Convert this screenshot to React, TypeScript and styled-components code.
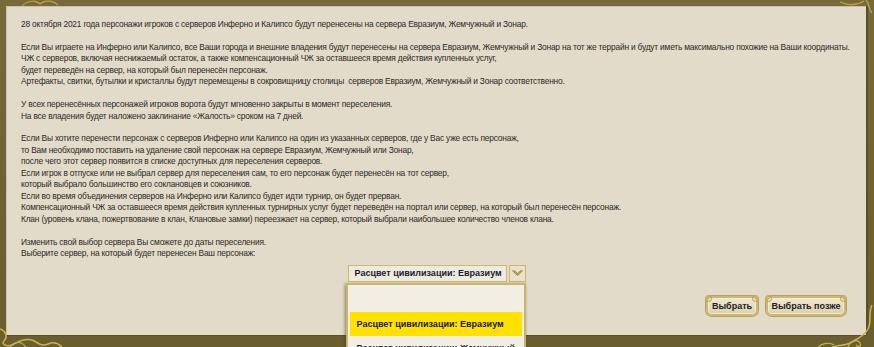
import styled, { createGlobalStyle } from "styled-components";

const GlobalStyle = createGlobalStyle`
  html, body {
    margin: 0;
    padding: 0;
    overflow: hidden;
    background: #6e6232;
  }
`;

const Frame = styled.div`
  position: relative;
  width: 874px;
  height: 347px;
  box-sizing: border-box;
  padding: 6px 8px 12px 6px;
  background: linear-gradient(180deg, #76693a 0%, #6e6232 60%, #6a5e2f 100%);
  overflow: hidden;
`;

const Panel = styled.div`
  height: 100%;
  box-sizing: border-box;
  padding: 13px 20px 0 15px;
  background: #e2dbca;
  box-shadow: inset 1px 1px 0 #cbc2aa, 2px 0 0 #5b5024, 0 1px 0 #5b5024;
  font-family: "Liberation Sans", Arial, sans-serif;
  font-size: 8.4px;
  letter-spacing: -0.2px;
  line-height: 11.45px;
  color: #2d2a24;
`;

const Paragraph = styled.p`
  margin: 0 0 11.45px 0;
  white-space: nowrap;

  &:last-of-type {
    margin-bottom: 0;
  }
`;

const SelectRow = styled.div`
  display: flex;
  justify-content: center;
  margin-top: 6px;
  padding-left: 6px;
`;

const SelectWrap = styled.div`
  position: relative;
  display: flex;
  gap: 2px;
`;

const SelectBox = styled.div`
  width: 151px;
  height: 15px;
  border: 1px solid #cdb86c;
  background: #efeadf;
  box-sizing: content-box;
  display: flex;
  align-items: center;
  padding-left: 6px;
`;

const BoldText = styled.span`
  font-family: "Liberation Sans", Arial, sans-serif;
  font-weight: bold;
  font-size: 9px;
  letter-spacing: 0;
  color: #1d1c2c;
  white-space: nowrap;
`;

const ArrowBox = styled.div`
  width: 15px;
  height: 15px;
  border: 1px solid #cdb86c;
  background: #e8e1cd;
  display: flex;
  align-items: center;
  justify-content: center;
`;

const DropList = styled.div`
  position: absolute;
  top: 18px;
  left: -2px;
  width: 176px;
  height: 90px;
  background: #f2eee4;
  border: 2px solid #c8b56e;
  box-shadow: -1px 1px 3px rgba(60, 50, 20, 0.55);
  padding-top: 3px;
  z-index: 2;
`;

const Option = styled.div<{ $active?: boolean }>`
  height: 24px;
  display: flex;
  align-items: center;
  padding-left: 7px;
  margin: 0 2px;
  background: ${({ $active }) => ($active ? "#ffe100" : "transparent")};
`;

const ButtonRow = styled.div`
  display: flex;
  justify-content: flex-end;
  gap: 8px;
  margin-top: 14px;
`;

const GoldButton = styled.div<{ $w: number }>`
  position: relative;
  width: ${({ $w }) => $w}px;
  height: 20px;
  box-sizing: border-box;
  border: 2px solid #cdb872;
  border-radius: 6px;
  background: linear-gradient(180deg, #efe7cf 0%, #e6dcbc 55%, #ddd0a6 100%);
  box-shadow: inset 0 0 0 1px #f3ecd4, 0 0 0 1px #b3a265;
  display: flex;
  align-items: center;
  justify-content: center;

  &::before,
  &::after {
    content: "";
    position: absolute;
    width: 5px;
    height: 5px;
    border: 1px solid #b99d43;
    border-radius: 50%;
    top: -3px;
  }
  &::before {
    left: -3px;
  }
  &::after {
    right: -3px;
  }
`;

const Ornament = styled.svg`
  position: absolute;
  pointer-events: none;
`;

const Chevron = () => (
  <svg width="11" height="7" viewBox="0 0 11 7">
    <path d="M0.5 0.8 L5.5 5.8 L10.5 0.8 L8.3 0.8 L5.5 3.4 L2.7 0.8 Z" fill="#c9a630" stroke="#8a7020" strokeWidth="0.6" />
  </svg>
);

export default function App() {
  return (
    <>
      <GlobalStyle />
      <Frame>
        <Panel>
          <Paragraph>
            28 октября 2021 года персонажи игроков с серверов Инферно и Калипсо будут перенесены на сервера Евразиум, Жемчужный и Зонар.
          </Paragraph>
          <Paragraph>
            Если Вы играете на Инферно или Калипсо, все Ваши города и внешние владения будут перенесены на сервера Евразиум, Жемчужный и Зонар на тот же террайн и будут иметь максимально похожие на Ваши координаты.
            <br />
            ЧЖ с серверов, включая неснижаемый остаток, а также компенсационный ЧЖ за оставшееся время действия купленных услуг,
            <br />
            будет переведён на сервер, на который был перенесён персонаж.
            <br />
            Артефакты, свитки, бутылки и кристаллы будут перемещены в сокровищницу столицы&nbsp; серверов Евразиум, Жемчужный и Зонар соответственно.
          </Paragraph>
          <Paragraph>
            У всех перенесённых персонажей игроков ворота будут мгновенно закрыты в момент переселения.
            <br />
            На все владения будет наложено заклинание «Жалость» сроком на 7 дней.
          </Paragraph>
          <Paragraph>
            Если Вы хотите перенести персонаж с серверов Инферно или Калипсо на один из указанных серверов, где у Вас уже есть персонаж,
            <br />
            то Вам необходимо поставить на удаление свой персонаж на сервере Евразиум, Жемчужный или Зонар,
            <br />
            после чего этот сервер появится в списке доступных для переселения серверов.
            <br />
            Если игрок в отпуске или не выбрал сервер для переселения сам, то его персонаж будет перенесён на тот сервер,
            <br />
            который выбрало большинство его соклановцев и союзников.
            <br />
            Если во время объединения серверов на Инферно или Калипсо будет идти турнир, он будет прерван.
            <br />
            Компенсационный ЧЖ за оставшееся время действия купленных турнирных услуг будет переведён на портал или сервер, на который был перенесён персонаж.
            <br />
            Клан (уровень клана, пожертвование в клан, Клановые замки) переезжает на сервер, который выбрали наибольшее количество членов клана.
          </Paragraph>
          <Paragraph>
            Изменить свой выбор сервера Вы сможете до даты переселения.
            <br />
            Выберите сервер, на который будет перенесен Ваш персонаж:
          </Paragraph>

          <SelectRow>
            <SelectWrap>
              <SelectBox>
                <BoldText>Расцвет цивилизации: Евразиум</BoldText>
              </SelectBox>
              <ArrowBox>
                <Chevron />
              </ArrowBox>
              <DropList>
                <Option />
                <Option $active>
                  <BoldText>Расцвет цивилизации: Евразиум</BoldText>
                </Option>
                <Option>
                  <BoldText>Расцвет цивилизации: Жемчужный</BoldText>
                </Option>
              </DropList>
            </SelectWrap>
          </SelectRow>

          <ButtonRow>
            <GoldButton $w={52}>
              <BoldText>Выбрать</BoldText>
            </GoldButton>
            <GoldButton $w={80}>
              <BoldText>Выбрать позже</BoldText>
            </GoldButton>
          </ButtonRow>
        </Panel>

        {/* frame scrollwork */}
        <Ornament style={{ left: 20, top: 0 }} width="40" height="7" viewBox="0 0 40 7">
          <path d="M2 6 C8 0, 16 0, 20 4 C24 0, 32 0, 38 5" fill="none" stroke="#b9a24c" strokeWidth="1.2" />
        </Ornament>
        <Ornament style={{ right: 0, top: 0 }} width="36" height="14" viewBox="0 0 36 14">
          <path d="M2 2 C10 6, 20 5, 26 1 M28 0 C32 4, 30 9, 34 13" fill="none" stroke="#b9a24c" strokeWidth="1.3" />
        </Ornament>
        <Ornament style={{ left: 0, bottom: 0 }} width="62" height="22" viewBox="0 0 62 22">
          <path d="M0 4 C6 6, 8 12, 4 16 C1 19, 6 22, 12 20 C18 17, 24 13, 32 15 C38 17, 40 22, 48 19 C54 16, 58 18, 62 22" fill="none" stroke="#c9b24a" strokeWidth="1.6" />
          <path d="M10 22 C14 16, 22 16, 26 22" fill="none" stroke="#c9b24a" strokeWidth="1.2" />
        </Ornament>
        <Ornament style={{ right: 0, bottom: 0 }} width="60" height="42" viewBox="0 0 60 42">
          <path d="M58 0 C54 8, 58 16, 54 24 C50 32, 42 34, 36 38 C30 41, 24 40, 18 42" fill="none" stroke="#c9b24a" strokeWidth="1.6" />
          <path d="M34 42 C36 36, 44 34, 46 38 C48 42, 44 42, 42 40" fill="none" stroke="#c9b24a" strokeWidth="1.2" />
          <path d="M4 42 C8 38, 16 37, 20 40" fill="none" stroke="#c9b24a" strokeWidth="1.2" />
        </Ornament>
      </Frame>
    </>
  );
}
